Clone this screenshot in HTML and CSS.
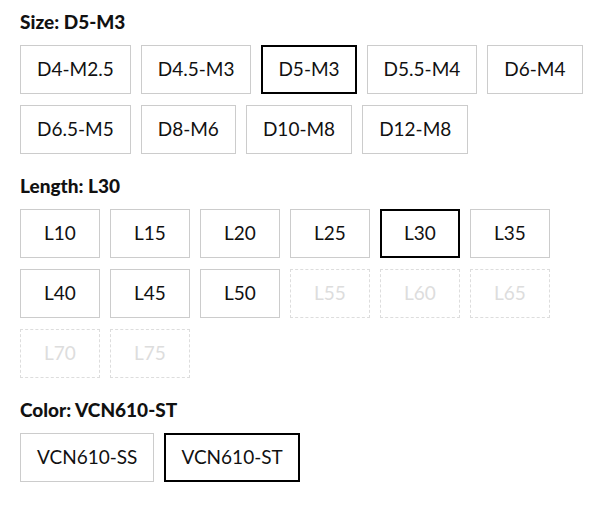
FILE: index.html
```html
<!DOCTYPE html>
<html lang="en">
<head>
<meta charset="utf-8">
<title>Product options</title>
<link rel="stylesheet" href="styles.css">
</head>
<body>
<form class="options">
  <fieldset class="group">
    <legend class="title">Size: D5-M3</legend>
    <div class="choices">
      <button type="button" class="choice">D4-M2.5</button>
      <button type="button" class="choice">D4.5-M3</button>
      <button type="button" class="choice selected" aria-pressed="true">D5-M3</button>
      <button type="button" class="choice">D5.5-M4</button>
      <button type="button" class="choice">D6-M4</button>
      <button type="button" class="choice">D6.5-M5</button>
      <button type="button" class="choice">D8-M6</button>
      <button type="button" class="choice">D10-M8</button>
      <button type="button" class="choice">D12-M8</button>
    </div>
  </fieldset>
  <fieldset class="group">
    <legend class="title">Length: L30</legend>
    <div class="choices">
      <button type="button" class="choice">L10</button>
      <button type="button" class="choice">L15</button>
      <button type="button" class="choice">L20</button>
      <button type="button" class="choice">L25</button>
      <button type="button" class="choice selected" aria-pressed="true">L30</button>
      <button type="button" class="choice">L35</button>
      <button type="button" class="choice">L40</button>
      <button type="button" class="choice">L45</button>
      <button type="button" class="choice">L50</button>
      <button type="button" class="choice" disabled>L55</button>
      <button type="button" class="choice" disabled>L60</button>
      <button type="button" class="choice" disabled>L65</button>
      <button type="button" class="choice" disabled>L70</button>
      <button type="button" class="choice" disabled>L75</button>
    </div>
  </fieldset>
  <fieldset class="group">
    <legend class="title">Color: VCN610-ST</legend>
    <div class="choices">
      <button type="button" class="choice">VCN610-SS</button>
      <button type="button" class="choice selected" aria-pressed="true">VCN610-ST</button>
    </div>
  </fieldset>
</form>
</body>
</html>
```
FILE: styles.css
```css
* {
  box-sizing: border-box;
}

body {
  margin: 0;
  background: #fff;
  color: #111;
  font-family: Lato, sans-serif;
  font-size: 19px;
}

.options {
  display: grid;
  gap: 20px;
  padding: 10px 20px;
}

.group {
  min-width: 0;
  margin: 0;
  padding: 0;
  border: 0;
}

.title {
  padding: 0 0 11px;
  font-weight: 900;
  line-height: 24px;
}

.choices {
  display: flex;
  flex-wrap: wrap;
  gap: 11px 10px;
}

.choice {
  min-width: 80px;
  height: 49px;
  padding: 0 16px 2px;
  border: 1px solid #ccc;
  background: #fff;
  color: #111;
  font: inherit;
}

.selected {
  padding: 0 15px 2px;
  border: 2px solid #000;
}

.choice:disabled {
  border: 1px dashed #ddd;
  color: #ddd;
}
```
